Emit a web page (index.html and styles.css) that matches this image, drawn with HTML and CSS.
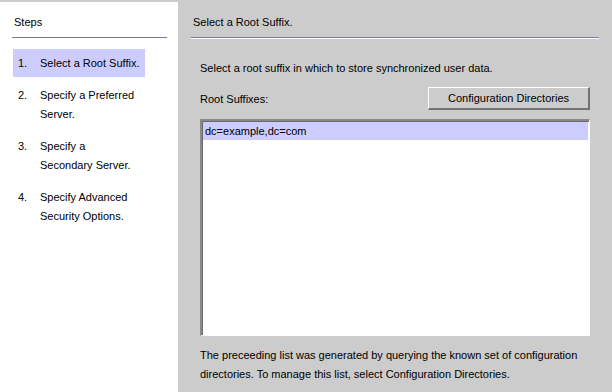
FILE: index.html
```html
<!DOCTYPE html>
<html>
<head>
<meta charset="utf-8">
<link rel="stylesheet" href="styles.css">
</head>
<body>
<div class="app">
  <div class="steps">
    <div class="steps-title">Steps</div>
    <div class="rule steps-rule"></div>
    <ol class="step-list">
      <li class="step current"><span class="num">1.</span><span class="label">Select a Root Suffix.</span></li>
      <li class="step"><span class="num">2.</span><span class="label">Specify a Preferred<br>Server.</span></li>
      <li class="step"><span class="num">3.</span><span class="label">Specify a<br>Secondary Server.</span></li>
      <li class="step"><span class="num">4.</span><span class="label">Specify Advanced<br>Security Options.</span></li>
    </ol>
  </div>
  <div class="main">
    <div class="main-title">Select a Root Suffix.</div>
    <div class="rule main-rule"></div>
    <div class="content">
      <p class="intro">Select a root suffix in which to store synchronized user data.</p>
      <div class="list-head">
        <span class="list-label">Root Suffixes:</span>
        <button class="btn">Configuration Directories</button>
      </div>
      <div class="listbox">
        <div class="row selected">dc=example,dc=com</div>
      </div>
      <p class="note">The preceeding list was generated by querying the known set of configuration<br>directories. To manage this list, select Configuration Directories.</p>
    </div>
  </div>
</div>
</body>
</html>
```
FILE: styles.css
```css
html, body {
  margin: 0;
  padding: 0;
}
body {
  background: #cccccc;
  font-family: "Liberation Sans", Arial, sans-serif;
  font-size: 11px;
  color: #000;
  width: 612px;
  height: 392px;
  overflow: hidden;
}
.app {
  display: flex;
  padding-top: 2px;
  height: 390px;
}
.steps {
  width: 178px;
  background: #ffffff;
  height: 390px;
}
.steps-title {
  padding: 11px 0 0 14px;
  line-height: 18px;
  height: 18px;
}
.rule {
  height: 1px;
  background: #7a7a9e;
  border-bottom: 1px solid #ffffff;
}
.steps-rule {
  margin: 6px 11px 0 12px;
}
.step-list {
  list-style: none;
  margin: 10px 0 0 13px;
  padding: 0;
  width: 132px;
  display: flex;
  flex-direction: column;
  gap: 4px;
}
.step {
  display: flex;
  padding: 5px 5px;
  line-height: 18.5px;
}
.step.current {
  background: #ccccff;
  line-height: 18px;
}
.num {
  width: 22px;
  flex: none;
}
.main {
  flex: 1;
  padding-left: 13px;
  padding-right: 13px;
}
.main-title {
  padding: 11px 0 0 2px;
  line-height: 18px;
  height: 18px;
}
.main-rule {
  margin-top: 6px;
}
.content {
  padding: 0 9px 0 9px;
}
.intro {
  margin: 20px 0 0 0;
  line-height: 18px;
}
.list-head {
  display: flex;
  justify-content: space-between;
  align-items: center;
  margin-top: 10px;
}
.list-label {
  line-height: 18px;
}
.btn {
  font-family: "Liberation Sans", Arial, sans-serif;
  font-size: 11px;
  color: #000;
  background: #cccccc;
  width: 162px;
  height: 23px;
  padding: 0;
  margin: 0;
  border-style: solid;
  border-width: 1px 2px 2px 1px;
  border-color: #ffffff #737373 #737373 #ffffff;
}
.listbox {
  margin-top: 9px;
  height: 214px;
  background: #ffffff;
  border-style: solid;
  border-width: 2px 1px 1px 2px;
  border-color: #8a8a8a #ffffff #ffffff #8a8a8a;
  box-shadow: inset 1px 1px 0 #6a6a6a;
}
.row {
  height: 18px;
  line-height: 18px;
  padding-left: 2px;
  margin: 1px 1px 0 1px;
}
.row.selected {
  background: #ccccff;
}
.note {
  margin: 10px 0 0 0;
  line-height: 18.5px;
}
```
